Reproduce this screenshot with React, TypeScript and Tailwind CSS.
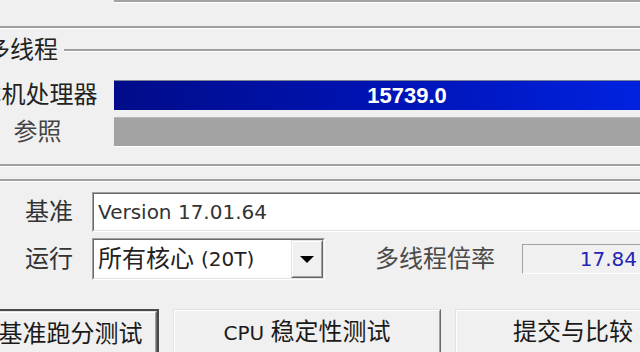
import React from "react";

function Zh({ children, className = "" }: { children: React.ReactNode; className?: string }) {
  return <span className={"text-[24px] " + className}>{children}</span>;
}

function Sunken({ className = "", inner = "", children }: { className?: string; inner?: string; children?: React.ReactNode }) {
  return (
    <div className={"border border-t-[#a0a0a0] border-l-[#a0a0a0] border-b-white border-r-white " + className}>
      <div className={"h-full border border-t-[#696969] border-l-[#696969] border-b-[#e3e3e3] border-r-[#e3e3e3] " + inner}>
        {children}
      </div>
    </div>
  );
}

function Raised({ className = "", inner = "", children }: { className?: string; inner?: string; children?: React.ReactNode }) {
  return (
    <div className={"border border-t-[#e3e3e3] border-l-[#e3e3e3] border-b-[#696969] border-r-[#696969] " + className}>
      <div className={"h-full border border-t-white border-l-white border-b-[#a0a0a0] border-r-[#a0a0a0] " + inner}>
        {children}
      </div>
    </div>
  );
}

function GroupLine({ className = "" }: { className?: string }) {
  return (
    <div className={className}>
      <div className="h-[2px] bg-[#a0a0a0]" />
      <div className="h-px bg-white" />
    </div>
  );
}

export default function App() {
  return (
    <div className="w-[640px] h-[352px] overflow-hidden bg-[#f0f0f0] font-['DejaVu_Sans','Noto_Sans_CJK_SC',sans-serif] text-[20px] text-[#222]">
      <div className="-mt-[27px] w-[760px] flex flex-col">
        {/* previous reference row */}
        <div className="flex h-[30px] items-center">
          <div className="ml-[-25px] w-[125px] text-center leading-[30px] text-[#444]">
            <Zh>参照</Zh>
          </div>
          <div className="ml-[14px] w-[586px] h-[30px] bg-[#a3a3a3] border-b border-b-white" />
        </div>

        <GroupLine className="mt-[23px]" />

        {/* group header 多线程 */}
        <div className="mt-[8px] flex h-[26px] items-center">
          <div className="ml-[-14px] leading-[26px]">
            <Zh>多线程</Zh>
          </div>
          <GroupLine className="ml-[6px] flex-1" />
        </div>

        {/* this processor */}
        <div className="mt-[17px] flex h-[30px] items-center">
          <div className="ml-[-25px] w-[125px] text-center leading-[30px] whitespace-nowrap">
            <Zh>本机处理器</Zh>
          </div>
          <div className="ml-[14px] w-[586px] h-[30px] border-t border-t-[#7e8494] bg-[linear-gradient(to_right,#000c8a,#0014b8_50%,#0026ea)] flex items-center justify-center">
            <span className="font-['Liberation_Sans',sans-serif] font-bold text-[22px] text-white leading-none">15739.0</span>
          </div>
        </div>

        {/* reference */}
        <div className="mt-[7px] flex h-[30px] items-center">
          <div className="ml-[-25px] w-[125px] text-center leading-[30px] text-[#444]">
            <Zh>参照</Zh>
          </div>
          <div className="ml-[14px] w-[586px] h-[30px] bg-[#a3a3a3] border-t border-t-[#b8b8b8] border-b border-b-white" />
        </div>

        <GroupLine className="mt-[17px]" />
        <GroupLine className="mt-[12px]" />

        {/* version */}
        <div className="mt-[10px] flex h-[40px] items-center">
          <div className="ml-[25px] w-[67px] leading-[40px] text-[#333]">
            <Zh>基准</Zh>
          </div>
          <Sunken className="w-[560px] h-[40px]" inner="bg-white flex items-center pl-[4px]">
            <span className="text-[#333] leading-none">Version 17.01.64</span>
          </Sunken>
        </div>

        {/* run */}
        <div className="mt-[6px] flex h-[42px] items-center">
          <div className="ml-[25px] w-[67px] leading-[42px] text-[#333]">
            <Zh>运行</Zh>
          </div>
          <Sunken className="w-[233px] h-[42px]" inner="bg-white flex items-stretch">
            <div className="flex-1 flex items-center pl-[4px] whitespace-nowrap text-[#222]">
              <Zh>所有核心</Zh>
              <span className="ml-[7px]">(20T)</span>
            </div>
            <Raised className="w-[32px] bg-[#f0f0f0]" inner="flex items-center justify-center">
              <svg width="14" height="7" viewBox="0 0 14 7">
                <polygon points="0,0 14,0 7,7" fill="#000" />
              </svg>
            </Raised>
          </Sunken>
          <div className="ml-[50px] w-[125px] leading-[42px] text-[#4a4a4a] whitespace-nowrap">
            <Zh>多线程倍率</Zh>
          </div>
          <div className="ml-[22px] w-[124px] h-[30px] border border-t-[#a0a0a0] border-l-[#a0a0a0] border-b-white border-r-white flex items-center justify-end pr-[8px]">
            <span className="text-[#2424b4] leading-none">17.84</span>
          </div>
        </div>

        {/* buttons */}
        <div className="mt-[29px] flex h-[50px]">
          <div className="ml-[-18px] w-[177px] h-[50px] border-2 border-[#4a4a4a]">
            <Raised className="h-full bg-[#f0f0f0]" inner="flex items-start justify-center pt-[3px]">
              <Zh className="text-[#1a1a1a] whitespace-nowrap">基准跑分测试</Zh>
            </Raised>
          </div>
          <Raised className="ml-[14px] w-[268px] h-[50px] bg-[#f0f0f0]" inner="flex items-start justify-center pt-[4px]">
            <span className="whitespace-nowrap text-[#1a1a1a] leading-[34px]">
              CPU <Zh>稳定性测试</Zh>
            </span>
          </Raised>
          <Raised className="ml-[14px] w-[236px] h-[50px] bg-[#f0f0f0]" inner="flex items-start justify-center pt-[4px]">
            <Zh className="text-[#1a1a1a] whitespace-nowrap leading-[34px]">提交与比较</Zh>
          </Raised>
        </div>
      </div>
    </div>
  );
}
